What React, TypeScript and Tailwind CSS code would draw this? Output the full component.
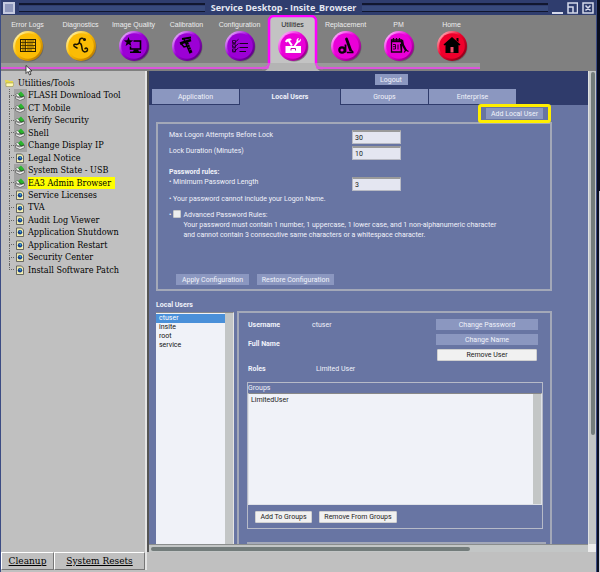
import React, { useState } from 'react';
import clsx from 'clsx';

type NavItem = {
    label: string;
    tone: 'amber' | 'violet' | 'magenta' | 'red';
    icon: React.ReactNode;
};

const TONES = {
    amber: ['#fff3a8', '#fbbc05', '#b97a00'],
    violet: ['#eab0ff', '#9c00d6', '#5b0080'],
    magenta: ['#ffb8ff', '#ea00d8', '#8f0085'],
    red: ['#ffb0b8', '#f0002c', '#8a0018'],
};

// Glyphs are drawn inside a 30x30 box, centred on the round button
const NAV_ITEMS: NavItem[] = [
    {
        label: 'Error Logs',
        tone: 'amber',
        icon: (
            <g fill="none" stroke="#2a2000">
                <rect x="7.5" y="8.5" width="15" height="12" />
                <path d="M12.5 8v13M8 11.5h14M8 14.5h14M8 17.5h14" strokeWidth=".8" />
                <path d="M9 10h3M14 10h7M9 13h3M14 13h6M9 16h3M14 16h7M9 19h3M14 19h5" strokeWidth=".6" />
            </g>
        ),
    },
    {
        label: 'Diagnostics',
        tone: 'amber',
        icon: (
            <g fill="none" stroke="#1a1400" strokeWidth="1.5" strokeLinecap="round">
                <path d="M17 7.5c-2.500-.8-3.500.8-3.500 3 0 2-2 3.500-4 2.800-2-.6-2.200 1.800-.5 2.500l2 1.200" />
                <path d="M13.5 12c3 .3 1.800 4.500 3 7.300 1 2.300 4.500 2 5-.3.300-1.800-1.500-2.500-2.500-1.300" />
                <circle cx="18.5" cy="8.5" r=".8" />
            </g>
        ),
    },
    {
        label: 'Image Quality',
        tone: 'violet',
        icon: (
            <g fill="#000">
                <path d="M9.5 6l1.2 3.300 3.500.1-2.800 2.200 1 3.500-2.900-2-2.900 2 1-3.500L4.800 9.400l3.500-.1z" />
                <path d="M14.5 10h7v8h-10v-2.500" fill="none" stroke="#000" strokeWidth="1.6" />
                <path d="M15 18.5h4l1 2h2v1.5H11v-1.500h3z" />
            </g>
        ),
    },
    {
        label: 'Calibration',
        tone: 'violet',
        icon: (
            <g fill="none" stroke="#000">
                <path d="M8 12.5l11-3.500" strokeWidth="2.6" />
                <path d="M10 8l9-1.500" strokeWidth="1.8" />
                <path d="M14.5 11.5l4.500 10.500" strokeWidth="3.2" />
                <path d="M9 12.5l3 3.500 3.500-1M12 8l1 3" strokeWidth="1.5" />
                <path d="M15 14l2.500-.8M16 16.500l2.500-.8M17 19l2.500-.8" stroke="#8a20b0" strokeWidth=".6" />
            </g>
        ),
    },
    {
        label: 'Configuration',
        tone: 'violet',
        icon: (
            <g fill="none" stroke="#16001c" strokeWidth=".7">
                <path d="M7.5 9.5h3v3h-3zM7.5 13.7h3v3h-3zM7.5 18h3v3h-3z" />
                <path d="M7.5 10.500l1.500 1.800 4.500-4M7.500 14.700l1.500 1.800 4.500-4M7.500 19l1.500 1.800 4.500-4" strokeWidth=".9" />
                <path d="M14.5 12.5H23M14.5 16.500H23M14.5 20.500H21" strokeWidth="1" />
            </g>
        ),
    },
    {
        label: 'Utilities',
        tone: 'magenta',
        icon: (
            <g fill="#fff">
                <path d="M7.5 15h15.500v7h-15.500z" />
                <path d="M13 19.5v-2h4.500v2" fill="none" stroke="#c000b0" />
                <path d="M7 10.5c1-2.500 3-3.500 6-2.800l.8 1.200-2 .8 3 4.300-1.800 1-3-4.500-1.500 1z" />
                <path d="M22.5 7.5c1 2-.2 4-2.300 4.200L17.500 15h-1.800l2.800-4.500c-.4-1.800.8-3.500 2.500-3.500l-1 2 1 1z" />
            </g>
        ),
    },
    {
        label: 'Replacement',
        tone: 'magenta',
        icon: (
            <g fill="none" stroke="#0d000c">
                <circle cx="11" cy="19" r="2.7" strokeWidth="2.2" />
                <path d="M14.5 21.500v-8" strokeWidth="1.8" />
                <path d="M15.5 8l4 11" strokeWidth="2.8" strokeLinecap="round" />
                <path d="M16 21.500h6.500M20 19l2 2" strokeWidth="1.6" />
            </g>
        ),
    },
    {
        label: 'PM',
        tone: 'magenta',
        icon: (
            <g fill="none" stroke="#14000f">
                <path d="M7.5 9h10v12h-10z" strokeWidth="1.3" />
                <path d="M7 10.5h11M9.5 7v3M12.5 7v3M15.500 7v3" strokeWidth="1.3" />
                <path d="M9 13.5h2.500v4.500H9M9 15.700h2.500M14 13.500v5" strokeWidth=".9" />
                <path d="M18 9l1 5 3 5.500" strokeWidth="2.2" />
                <path d="M16.5 13l1 8M20 21.500l2-2.500 2.500 1.500" strokeWidth="1.2" />
            </g>
        ),
    },
    {
        label: 'Home',
        tone: 'red',
        icon: (
            <g fill="#000">
                <path d="M15 6l8.500 7.500-1 1L21.500 14v8h-13v-8l-1 .5-1-1z" />
                <path d="M19.5 7h2v4l-2-1.500z" />
                <path d="M13.5 16h3v5.500h-3z" fill="#f0506a" />
            </g>
        ),
    },
];

const TOOLS = [
    { label: 'FLASH Download Tool', kind: 'tool' },
    { label: 'CT Mobile', kind: 'tool' },
    { label: 'Verify Security', kind: 'tool' },
    { label: 'Shell', kind: 'tool' },
    { label: 'Change Display IP', kind: 'tool' },
    { label: 'Legal Notice', kind: 'page' },
    { label: 'System State - USB', kind: 'tool' },
    { label: 'EA3 Admin Browser', kind: 'tool', active: true },
    { label: 'Service Licenses', kind: 'page' },
    { label: 'TVA', kind: 'page' },
    { label: 'Audit Log Viewer', kind: 'page' },
    { label: 'Application Shutdown', kind: 'page' },
    { label: 'Application Restart', kind: 'page' },
    { label: 'Security Center', kind: 'page' },
    { label: 'Install Software Patch', kind: 'page' },
];

const TABS = ['Application', 'Local Users', 'Groups', 'Enterprise'];

function TitleStripes() {
    return (
        <div className="flex-1 flex flex-col justify-between h-[10px]">
            <div className="h-px bg-[#11172f]" />
            <div className="h-px bg-[#11172f]" />
            <div className="h-[5px] bg-[#384a7c]" />
            <div className="h-px bg-[#11172f]" />
        </div>
    );
}

function TitleBar() {
    return (
        <header className="h-[15px] shrink-0 flex items-center px-0.5 gap-1 bg-[#2f3d6e]">
            <button aria-label="Window menu" className="size-[12px] border-2 border-[#c5cae0] bg-[#8f98bd]" />
            <TitleStripes />
            <h1 className="px-0.5 text-[9px] leading-[14px] font-bold font-['Open_Sans',sans-serif] text-[#e4e7f2] whitespace-nowrap">
                Service Desktop - Insite_Browser
            </h1>
            <TitleStripes />
            <div className="flex gap-1">
                <button aria-label="Minimize">
                    <svg width="11" height="12"><path d="M0 11h11" stroke="#d5d9ea" strokeWidth="2" /></svg>
                </button>
                <button aria-label="Restore">
                    <svg width="11" height="12" fill="none" stroke="#d5d9ea" strokeWidth="1.5"><path d="M1 1h9.500v10H1zM1 5h5v6" /></svg>
                </button>
                <button aria-label="Close">
                    <svg width="12" height="12" fill="none" stroke="#d5d9ea" strokeWidth="1.5"><path d="M1 1h10v10H1zM3.500 3.500l5 5M8.500 3.500l-5 5" /></svg>
                </button>
            </div>
        </header>
    );
}

function RoundIcon({ tone, children }: { tone: NavItem['tone']; children: React.ReactNode }) {
    const [light, base, dark] = TONES[tone];
    const id = React.useId();
    return (
        <svg width="32" height="32" viewBox="0 0 32 32">
            <defs>
                <linearGradient id={id} x1="0" y1="0" x2="1" y2="1">
                    <stop offset="0.1" stopColor={light} />
                    <stop offset="0.45" stopColor={base} />
                    <stop offset="0.9" stopColor={dark} />
                </linearGradient>
            </defs>
            <circle cx="17" cy="17" r="14.5" fill="#555" opacity=".6" />
            <circle cx="16" cy="16" r="15" fill={`url(#${id})`} />
            <circle cx="16" cy="16" r="12.8" fill={base} />
            <g transform="translate(1 1)">{children}</g>
        </svg>
    );
}

// Raised outline of the open section, flowing into the line below the toolbar
function ActiveOutline() {
    return (
        <svg className="absolute -left-1 top-0" width="61" height="56" fill="none">
            <defs>
                <linearGradient id="outline" gradientUnits="userSpaceOnUse" x1="0" y1="0" x2="0" y2="56">
                    <stop offset=".86" stopColor="#ff00ff" />
                    <stop offset=".86" stopColor="#dc55dc" />
                </linearGradient>
            </defs>
            <path d="M7 56V6a5 5 0 0 1 5-5h37a5 5 0 0 1 5 5v50z" fill="#c3c3c3" />
            <path d="M7 48h47v5l4 3H3l4-3z" fill="#b4b4b4" />
            <path d="M0 53h2a5 5 0 0 0 5-5V6a5 5 0 0 1 5-5h37a5 5 0 0 1 5 5v42a5 5 0 0 0 5 5h2" stroke="url(#outline)" strokeWidth="2.5" />
        </svg>
    );
}

function Toolbar() {
    return (
        <nav className="shrink-0 bg-[#808080] flex">
            <div className="relative pr-0.5">
                <div className="absolute inset-x-0 bottom-[2px] h-[6px] bg-[#999] border-b-2 border-[#dc55dc]" />
                <div className="flex">
                    {NAV_ITEMS.map((item) => {
                        const active = item.label === 'Utilities';
                        return (
                            <a key={item.label} href="#" className="relative w-[53px] h-[56px] flex flex-col items-center pt-[5px]">
                                {active && <ActiveOutline />}
                                <span
                                    className={clsx(
                                        "relative text-[7px] leading-[10px] font-['Liberation_Sans',sans-serif] whitespace-nowrap",
                                        active ? 'text-[#222]' : 'text-[#ececec]'
                                    )}
                                >
                                    {item.label}
                                </span>
                                <span className="relative">
                                    <RoundIcon tone={item.tone}>{item.icon}</RoundIcon>
                                </span>
                            </a>
                        );
                    })}
                </div>
                <svg className="absolute left-6 top-[50px] z-10" width="8" height="11">
                    <path d="M1 .5v8l2-2 1.500 3.500 1.500-.8-1.500-3.200H7z" fill="#fff" stroke="#222" strokeWidth=".8" />
                </svg>
            </div>
        </nav>
    );
}

function ToolIcon() {
    return (
        <svg width="10" height="10">
            <path d="M.5 5.500l4 1.500 5-1.500v2L5 9.500l-4.500-2z" fill="#f4f4f4" stroke="#444" strokeWidth=".6" />
            <path d="M.5 3.500l2.500-1 2 2.500-2 1z" fill="#e8f4e8" stroke="#333" strokeWidth=".4" />
            <path d="M3 3l3-2.500L9.500 4.500 6 6z" fill="#2bb52f" />
            <path d="M4 3.500l2 2.500 3-1" stroke="#174d17" fill="none" strokeWidth=".7" />
        </svg>
    );
}

function PageIcon() {
    return (
        <svg width="10" height="10">
            <path d="M1.5 1h5L8.500 3v6.500h-7z" fill="#f2eeb0" stroke="#4a4a4a" strokeWidth=".8" />
            <circle cx="5" cy="5.2" r="2.2" fill="#123a8c" />
            <path d="M4 4.200l1.800-.6.6 1.600-1.200.6z" fill="#3fa9d0" />
        </svg>
    );
}

function Sidebar() {
    return (
        <aside className="w-[146px] shrink-0 flex flex-col bg-[#c0c0c0] border-r-2 border-[#e4e4e4] font-['Roboto_Slab','DejaVu_Serif_Condensed','DejaVu_Serif',serif] text-black">
            <ul className="grid auto-rows-fr h-[199px] mt-[6px] pl-1 text-[9px] leading-[12px] whitespace-nowrap">
                <li className="flex items-center gap-1">
                    <svg width="9" height="8">
                        <path d="M0 1h3l1 1h4v5H1z" fill="#e6d94e" />
                        <path d="M1 4h8L8 7.500H1z" fill="#fff9b0" stroke="#8a8440" strokeWidth=".5" />
                    </svg>
                    Utilities/Tools
                </li>
                {TOOLS.map((tool, i) => (
                    <li key={tool.label} className="flex items-stretch pl-1">
                        <span className="w-[5px] flex flex-col">
                            <span className="flex-1 border-l border-b border-dotted border-[#666]" />
                            <span className={clsx('flex-1', i < TOOLS.length - 1 && 'border-l border-dotted border-[#666]')} />
                        </span>
                        <span className={clsx('w-[13px] flex items-center pl-px', tool.kind === 'tool' && 'bg-[#a2a2a2]')}>
                            {tool.kind === 'tool' ? <ToolIcon /> : <PageIcon />}
                        </span>
                        <a href="#" className={clsx('ml-px pr-1', tool.active && 'bg-[#ffff00]')}>{tool.label}</a>
                    </li>
                ))}
            </ul>
            <div className="mt-auto flex text-[10px] leading-[14px]">
                <button className="w-[53px] border border-[#777] border-t-white border-l-white underline cursor-pointer h-[18px]">Cleanup</button>
                <button className="flex-1 border border-[#777] border-t-white border-l-white underline cursor-pointer h-[18px]">System Resets</button>
            </div>
        </aside>
    );
}

function FlatButton({ children, className }: { children: React.ReactNode; className?: string }) {
    return (
        <button className={clsx('h-[11px] bg-[#8b97c0] text-[#f0f2fa] text-center whitespace-nowrap', className)}>{children}</button>
    );
}

function LightButton({ children, className }: { children: React.ReactNode; className?: string }) {
    return (
        <button className={clsx('h-[12px] rounded-[1px] border border-[#d0d0d0] bg-[#f1f1f1] text-[#222] text-center whitespace-nowrap', className)}>
            {children}
        </button>
    );
}

function NumberField({ id, label, value }: { id: string; label: string; value: string }) {
    return (
        <div className="flex items-start">
            <label htmlFor={id} className="w-[183px]">{label}</label>
            <input
                id={id}
                defaultValue={value}
                className="w-[49px] h-[14px] px-0.5 bg-[#e4e6f1] text-[#222] border border-t-2 border-[#b8bac4] border-t-[#9a9a9a]"
            />
        </div>
    );
}

function PasswordPolicy() {
    return (
        <section className="w-[396px] h-[170px] flex flex-col pl-[11px] pt-1.5 border-2 border-[#a3a8b8]">
            <div className="flex flex-col gap-0.5">
                <NumberField id="attempts" label="Max Logon Attempts Before Lock" value="30" />
                <NumberField id="duration" label="Lock Duration (Minutes)" value="10" />
            </div>
            <h2 className="mt-[7px] font-bold">Password rules:</h2>
            <NumberField id="length" label="• Minimum Password Length" value="3" />
            <p className="mt-[3px]">• Your password cannot include your Logon Name.</p>
            <div className="mt-[6px] flex items-start gap-0.5">
                <span>•</span>
                <input id="advanced" type="checkbox" className="appearance-none size-[8px] rounded-[1px] bg-[#eee] border border-[#c8c8c8]" />
                <label htmlFor="advanced" className="leading-[10px]">
                    Advanced Password Rules:<br />
                    Your password must contain 1 number, 1 uppercase, 1 lower case, and 1 non-alphanumeric character<br />
                    and cannot contain 3 consecutive same characters or a whitespace character.
                </label>
            </div>
            <div className="mt-auto mb-1 pl-[7px] flex gap-2">
                <FlatButton className="w-[73px]">Apply Configuration</FlatButton>
                <FlatButton className="w-[77px]">Restore Configuration</FlatButton>
            </div>
        </section>
    );
}

function UserDetails() {
    return (
        <section className="flex-1 flex flex-col border-2 border-b-0 border-[#a3a8b8] pl-2 pr-[7px] pt-[6px]">
            <div className="flex justify-between pr-[5px]">
                <dl className="grid grid-cols-[64px_auto] auto-rows-[19px] pl-px pt-px">
                    <dt className="font-bold">Username</dt>
                    <dd>ctuser</dd>
                    <dt className="font-bold">Full Name</dt>
                    <dd />
                    <dt className="font-bold pt-[6px]">Roles</dt>
                    <dd className="pl-1 pt-[6px]">Limited User</dd>
                </dl>
                <div className="w-[102px] flex flex-col gap-1">
                    <FlatButton>Change Password</FlatButton>
                    <FlatButton>Change Name</FlatButton>
                    <LightButton className="mx-px">Remove User</LightButton>
                </div>
            </div>
            <div className="mt-[5px] border border-[#b6bac8] flex flex-col">
                <label htmlFor="groups">Groups</label>
                <div className="flex h-[112px] bg-[#c3c6c6] border border-t-[#888] border-[#dfe2e8]">
                    <select id="groups" size={4} className="flex-1 appearance-none bg-[#f0f2f8] text-[#222] overflow-hidden outline-none">
                        <option className="p-0 pl-0.5 pt-0.5 min-h-0">LimitedUser</option>
                    </select>
                    <div className="w-[8px]" />
                </div>
                <div className="flex gap-[7px] pl-[7px] pt-[6px] pb-[5px]">
                    <LightButton className="w-[57px]">Add To Groups</LightButton>
                    <LightButton className="w-[78px]">Remove From Groups</LightButton>
                </div>
            </div>
            <div className="mt-[13px] -mr-[3px] flex-1 border-2 border-b-0 border-[#a3a8b8]" />
        </section>
    );
}

function AdminBrowser() {
    const [tab, setTab] = useState('Local Users');

    return (
        <main className="flex-1 min-w-0 grid grid-cols-[1fr_8px] grid-rows-[1fr_8px] font-['Roboto',sans-serif] text-[7px] leading-[10px] text-[#f0f2fa] bg-[#c3c6c6] border-l-2 border-l-[#555] mb-[18px]">
            <div className="flex flex-col overflow-hidden bg-[#6875a3] min-h-0">
                <div className="shrink-0 bg-[#2f3b6b] pt-[3px] px-[3px] flex flex-col">
                    <div className="flex pl-[45px] justify-center">
                        <FlatButton className="w-[33px]">Logout</FlatButton>
                    </div>
                    <div className="mt-1 flex gap-px" role="tablist">
                        {TABS.map((name) => (
                            <button
                                key={name}
                                role="tab"
                                aria-selected={tab === name}
                                onClick={() => setTab(name)}
                                className={clsx(
                                    'h-[16px] cursor-pointer',
                                    tab === name ? 'w-[100px] bg-[#6875a3] font-bold' : 'w-[87px] bg-[#8b97c0] border-b border-[#2f3b6b]'
                                )}
                            >
                                {name}
                            </button>
                        ))}
                    </div>
                </div>
                <div className="pl-[7px] w-[403px] flex-1 flex flex-col min-h-0">
                    <div className="flex justify-end pt-[3px] pb-[3px] pr-[9px]">
                        <div className="relative">
                            <FlatButton className="w-[57px] block">Add Local User</FlatButton>
                            <div className="absolute -inset-x-2 -inset-y-1 rounded-[3px] border-3 border-[#ffee00] pointer-events-none" />
                        </div>
                    </div>
                    <PasswordPolicy />
                    <label htmlFor="users" className="mt-[9px] font-bold">Local Users</label>
                    <div className="flex flex-1 gap-[3px] mt-px">
                        <div className="w-[78px] mt-px flex bg-[#c3c6c6] border-t border-[#888] border-r border-r-[#e4e4e4]">
                            <select id="users" size={8} defaultValue="ctuser" className="w-[69px] appearance-none pt-px bg-[#f0f2f8] text-[#111] overflow-hidden outline-none">
                                {['ctuser', 'insite', 'root', 'service'].map((user) => (
                                    <option
                                        key={user}
                                        className="p-0 pl-[3px] min-h-0 h-[9px] checked:bg-[linear-gradient(#4a90d9,#4a90d9)] checked:text-white"
                                    >
                                        {user}
                                    </option>
                                ))}
                            </select>
                        </div>
                        <UserDetails />
                    </div>
                </div>
            </div>
            <div className="flex flex-col items-center border-l border-[#e0e2e2] pt-px">
                <div className="w-1 h-[77%] rounded-full bg-[#737c7b]" />
            </div>
            <div className="flex items-center border-t border-[#8a8d8d] pl-0.5">
                <div className="w-[73%] h-1 rounded-full bg-[#737c7b]" />
            </div>
            <div className="bg-[#ececec]" />
        </main>
    );
}

export default function App() {
    return (
        <div className="h-screen flex bg-[#0b0f20] overflow-hidden">
            <div className="flex-1 min-w-0 flex flex-col border-x border-[#3c4c84]">
                <TitleBar />
                <Toolbar />
                <div className="flex-1 min-h-0 flex bg-[#c0c0c0] pb-0.5">
                    <Sidebar />
                    <AdminBrowser />
                </div>
            </div>
            {/* sliver of the window underneath */}
            <div className="w-[3px] flex flex-col items-end">
                <div className="h-1/3" />
                <div className="w-px flex-1 bg-[#c9ccd8]" />
            </div>
        </div>
    );
}
